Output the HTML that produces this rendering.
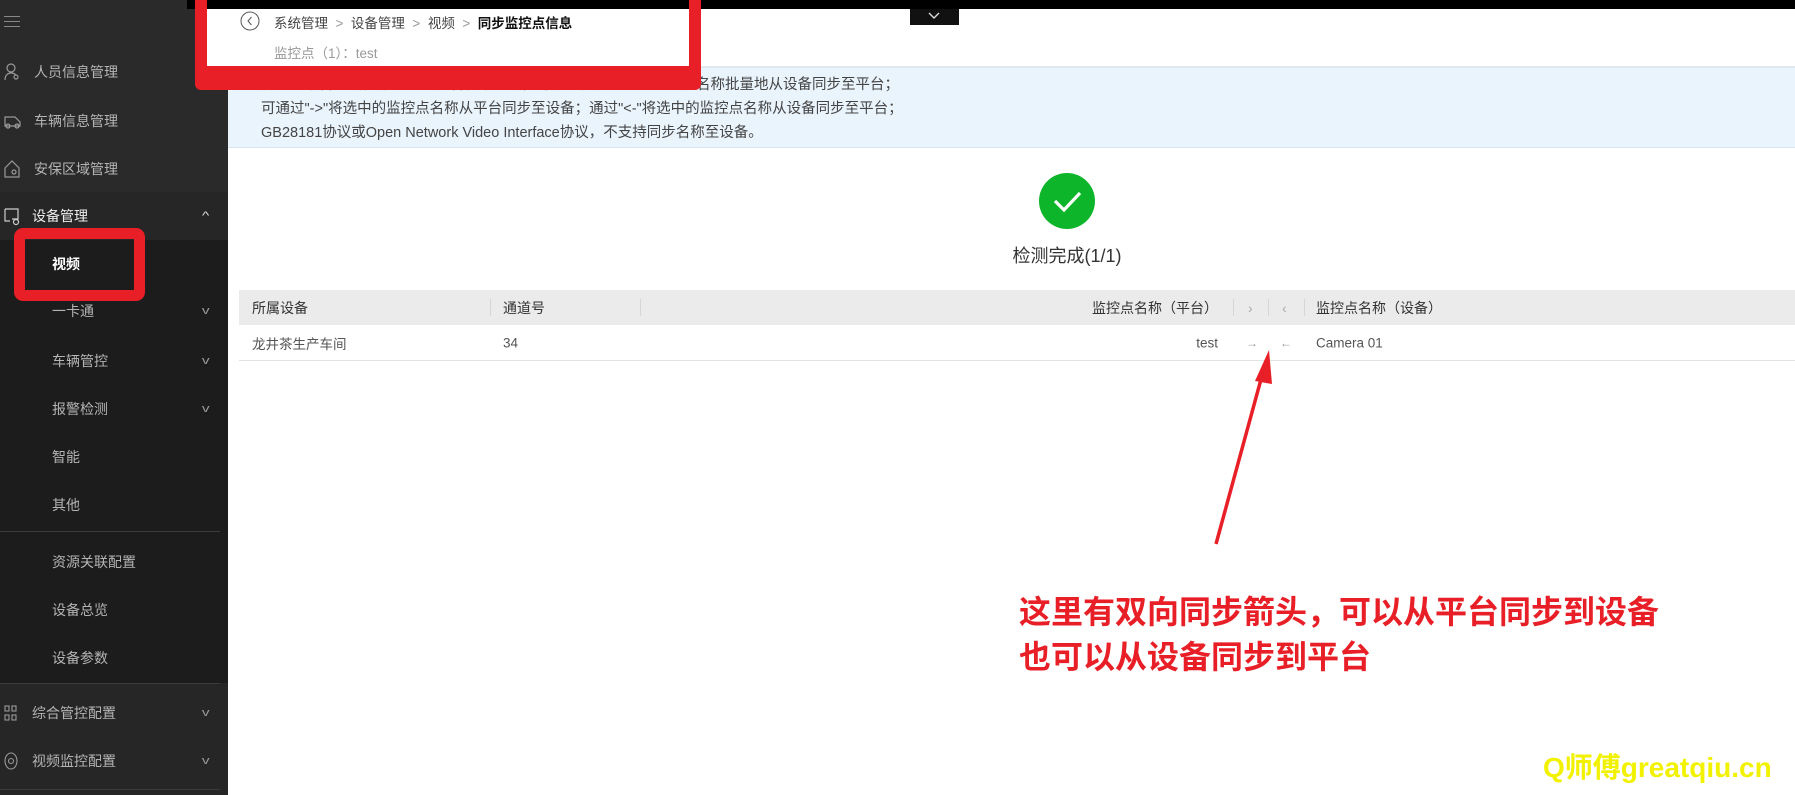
<!DOCTYPE html>
<html><head><meta charset="utf-8">
<style>
*{margin:0;padding:0;box-sizing:border-box}
body{width:1795px;height:795px;overflow:hidden;background:#fff;position:relative;font-family:"Liberation Sans","Noto Sans CJK SC",sans-serif;}
.a{position:absolute;white-space:nowrap}
.sb{position:absolute;left:0;top:0;width:228px;height:795px;background:#1c1c1c}
.si{position:absolute;color:#b4b4b4;font-size:14px;transform:translateY(-50%)}
.chev{position:absolute;left:203px;color:#999;font-size:11px;transform:translateY(-50%) scaleX(1.4)}
.hd{position:absolute;top:290px;left:239px;right:0;height:35px;background:#ebebeb;font-size:14px;color:#333}
.hd span,.rw span{position:absolute;top:50%;transform:translateY(-50%);white-space:nowrap}
.dv{position:absolute;top:9px;width:1px;height:17px;background:#d6d6d6}
.rw{position:absolute;top:326px;left:239px;right:0;height:35px;border-bottom:1px solid #e2e2e2;font-size:13.5px;color:#555}
</style></head><body>
<div class="sb">
  <div class="a" style="left:0;top:0;width:228px;height:192px;background:#2a2a2a"></div>
  <div class="a" style="left:0;top:192px;width:228px;height:48px;background:#262626"></div>
  <div class="a" style="left:0;top:683px;width:228px;height:112px;background:#262626"></div>
  <div class="a" style="left:0;top:531px;width:220px;height:1px;background:#3a3a3a"></div>
  <div class="a" style="left:0;top:683px;width:220px;height:1px;background:#3a3a3a"></div>
  <div class="a" style="left:0;top:789px;width:220px;height:1px;background:#3a3a3a"></div>
  <div class="a" style="left:4px;top:16px;width:16px;height:1px;background:#888;box-shadow:0 5px 0 #888,0 10px 0 #888"></div>
  <svg class="a" style="left:4px;top:63px" width="16" height="18" viewBox="0 0 16 18" fill="none" stroke="#999" stroke-width="1.2"><circle cx="7" cy="5" r="4"/><path d="M1 17c0-5 3-7 6-7s4 1 5 2"/><circle cx="12" cy="14" r="2"/></svg>
  <div class="si" style="left:34px;top:72px">人员信息管理</div>
  <svg class="a" style="left:4px;top:113px" width="18" height="16" viewBox="0 0 18 16" fill="none" stroke="#999" stroke-width="1.2"><path d="M1 4h10l5 5v4H1z"/><circle cx="4" cy="13" r="2"/><circle cx="13" cy="13" r="2"/></svg>
  <div class="si" style="left:34px;top:121px">车辆信息管理</div>
  <svg class="a" style="left:4px;top:160px" width="16" height="18" viewBox="0 0 16 18" fill="none" stroke="#999" stroke-width="1.2"><path d="M1 8l7-7 7 7v9H1z"/><circle cx="10" cy="12" r="2"/></svg>
  <div class="si" style="left:34px;top:169px">安保区域管理</div>
  <svg class="a" style="left:4px;top:208px" width="18" height="18" viewBox="0 0 18 18" fill="none" stroke="#ccc" stroke-width="1.2"><path d="M1 1h13v10H8M1 1v12h5"/><circle cx="12" cy="14" r="2.5"/></svg>
  <div class="si" style="left:32px;top:216px;color:#eee">设备管理</div>
  <div class="chev" style="top:216px;color:#ddd">^</div>
  <div class="si" style="left:52px;top:264px;color:#fff;font-weight:bold">视频</div>
  <div class="a" style="left:14px;top:228px;width:131px;height:73px;border:11px solid #e81f27;border-radius:9px"></div>
  <div class="si" style="left:52px;top:311px">一卡通</div><div class="chev" style="top:311px">v</div>
  <div class="si" style="left:52px;top:361px">车辆管控</div><div class="chev" style="top:361px">v</div>
  <div class="si" style="left:52px;top:409px">报警检测</div><div class="chev" style="top:409px">v</div>
  <div class="si" style="left:52px;top:457px">智能</div>
  <div class="si" style="left:52px;top:505px">其他</div>
  <div class="si" style="left:52px;top:562px">资源关联配置</div>
  <div class="si" style="left:52px;top:610px">设备总览</div>
  <div class="si" style="left:52px;top:658px">设备参数</div>
  <svg class="a" style="left:4px;top:705px" width="14" height="16" viewBox="0 0 14 16" fill="none" stroke="#999" stroke-width="1.1"><rect x="1" y="1" width="4" height="5"/><rect x="8" y="1" width="4" height="5"/><rect x="1" y="10" width="4" height="5"/><rect x="8" y="10" width="4" height="5"/></svg>
  <div class="si" style="left:32px;top:713px">综合管控配置</div><div class="chev" style="top:713px">v</div>
  <svg class="a" style="left:3px;top:752px" width="16" height="18" viewBox="0 0 16 18" fill="none" stroke="#999" stroke-width="1.1"><ellipse cx="8" cy="9" rx="6" ry="8"/><circle cx="8" cy="9" r="2.5"/></svg>
  <div class="si" style="left:32px;top:761px">视频监控配置</div><div class="chev" style="top:761px">v</div>
</div>
<div class="a" style="left:187px;top:0;width:1608px;height:9px;background:#000"></div>
<div class="a" style="left:910px;top:9px;width:49px;height:16px;background:#111"></div>
<svg class="a" style="left:927px;top:11px" width="14" height="10" viewBox="0 0 14 10" fill="none" stroke="#ddd" stroke-width="1.4"><path d="M2 2l5 5 5-5"/></svg>

<div class="a" style="left:228px;top:66px;width:1567px;height:82px;background:#eaf4fd;border-top:2px solid #dfe8f0;border-bottom:1px solid #d8e6f2"></div>
<div class="a" style="left:261px;top:73px;font-size:14.5px;color:#444;line-height:24px">检测到平台与设备中的监控点名称不一致，可通过同步按钮将监控点名称批量地从设备同步至平台；<br>可通过"-&gt;"将选中的监控点名称从平台同步至设备；通过"&lt;-"将选中的监控点名称从设备同步至平台；<br>GB28181协议或Open Network Video Interface协议，不支持同步名称至设备。</div>

<div class="a" style="left:195px;top:-14px;width:506px;height:104px;border:12px solid #e81f27;border-radius:6px;background:transparent"></div>
<div class="a" style="left:207px;top:9px;width:482px;height:57px;background:#fff"></div>
<div class="a" style="left:207px;top:66px;width:482px;height:12px;background:#e81f27"></div>
<svg class="a" style="left:240px;top:11px" width="20" height="20" viewBox="0 0 20 20" fill="none" stroke="#555" stroke-width="1"><circle cx="10" cy="10" r="9"/><path d="M11.5 6l-3.5 4 3.5 4"/></svg>
<div class="a" style="left:274px;top:12px;font-size:13.5px;color:#444">系统管理 <span style="color:#999">&nbsp;&gt;&nbsp;</span> 设备管理 <span style="color:#999">&nbsp;&gt;&nbsp;</span> 视频 <span style="color:#999">&nbsp;&gt;&nbsp;</span> <b style="color:#111">同步监控点信息</b></div>
<div class="a" style="left:274px;top:42px;font-size:13.5px;color:#999">监控点（1）：test</div>

<svg class="a" style="left:1039px;top:173px" width="56" height="56" viewBox="0 0 56 56"><circle cx="28" cy="28" r="28" fill="#0cb52a"/><path d="M16 28l9 9 16-17" fill="none" stroke="#fff" stroke-width="3.2"/></svg>
<div class="a" style="left:967px;top:242px;width:200px;text-align:center;font-size:18px;color:#333">检测完成(1/1)</div>

<div class="hd">
  <span style="left:13px">所属设备</span>
  <div class="dv" style="left:251px"></div>
  <span style="left:264px">通道号</span>
  <div class="dv" style="left:401px"></div>
  <span style="right:577px">监控点名称（平台）</span>
  <div class="dv" style="left:994px"></div>
  <span style="left:1009px;color:#aaa">›</span>
  <div class="dv" style="left:1029px"></div>
  <span style="left:1043px;color:#aaa">‹</span>
  <div class="dv" style="left:1065px"></div>
  <span style="left:1077px">监控点名称（设备）</span>
</div>
<div class="rw">
  <span style="left:13px">龙井茶生产车间</span>
  <span style="left:264px">34</span>
  <span style="right:577px">test</span>
  <span style="left:1007px;color:#999;font-size:12px">→</span>
  <span style="left:1041px;color:#999;font-size:12px">←</span>
  <span style="left:1077px">Camera 01</span>
</div>

<svg class="a" style="left:0;top:0" width="1795" height="795" viewBox="0 0 1795 795"><path d="M1216 544L1263 372" stroke="#e81f27" stroke-width="3.5" fill="none"/><path d="M1269 350L1255 381L1272 384Z" fill="#e81f27"/></svg>
<div class="a" style="left:1019px;top:590px;font-size:32px;font-weight:bold;color:#e81f27;line-height:45px">这里有双向同步箭头，可以从平台同步到设备<br>也可以从设备同步到平台</div>
<div class="a" style="left:1543px;top:746px;font-size:28px;font-weight:bold;color:#f2f200">Q师傅greatqiu.cn</div>
</body></html>
